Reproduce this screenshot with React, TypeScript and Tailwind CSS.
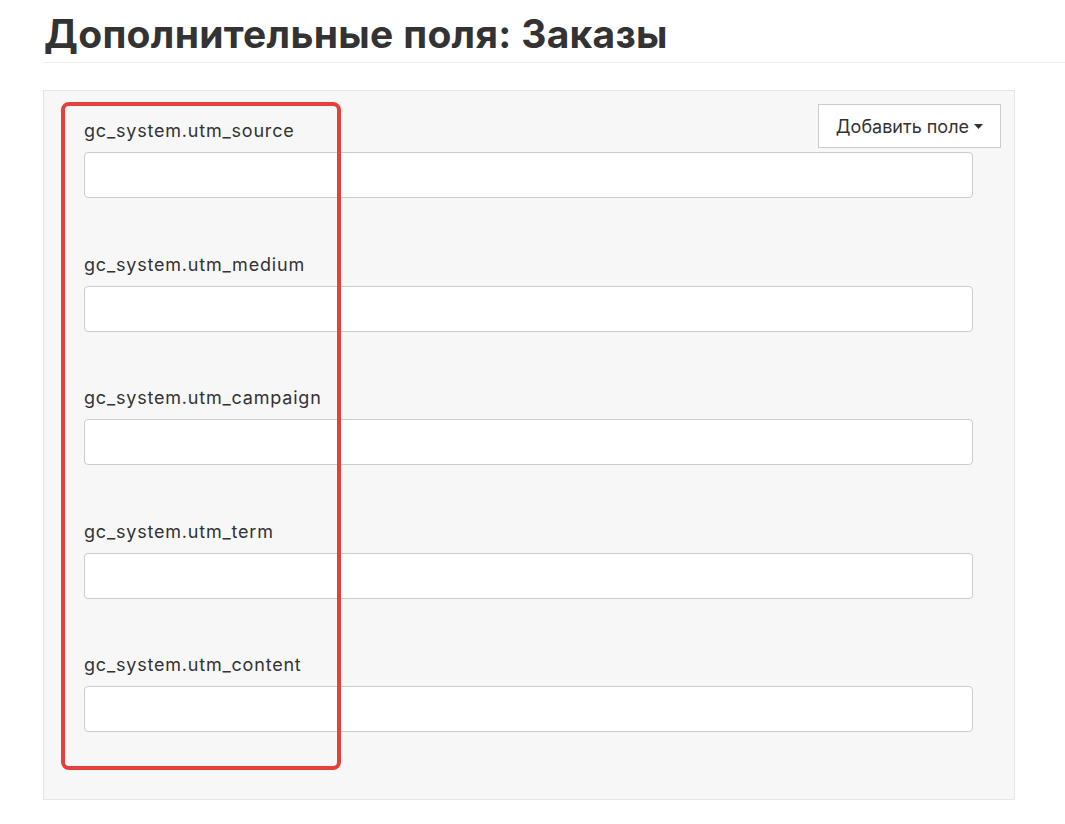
import React from "react";

const fields = [
  "gc_system.utm_source",
  "gc_system.utm_medium",
  "gc_system.utm_campaign",
  "gc_system.utm_term",
  "gc_system.utm_content",
];

export default function App() {
  return (
    <div
      className="relative min-h-[824px] w-[1065px] bg-white text-[#333]"
      style={{ fontFamily: "Inter, 'Noto Sans', sans-serif" }}
    >
      <div className="pl-[43px]">
        <h1 className="pl-[1px] pt-[12px] pb-[6px] text-[39px] font-bold leading-[44px] tracking-[0.3px] text-[#333]">
          Дополнительные поля: Заказы
        </h1>
        <div className="h-px bg-[#eeeeee]" />
        <div className="mt-[27px] w-[972px] border border-[#e6e6e6] bg-[#f7f7f7] pt-[13px] pl-[40px] pr-[13px] pb-[67px]">
          <button className="float-right flex h-[44px] items-center gap-[5px] border border-[#cccccc] bg-white pl-[17px] pr-[17px] text-[18px] text-[#333]">
            Добавить поле
            <svg width="9" height="5" viewBox="0 0 9 5">
              <path d="M0 0h9L4.5 5z" fill="#333" />
            </svg>
          </button>
          <div className="flex flex-col gap-[54.5px] pr-[28px] pt-[15px]">
            {fields.map((f) => (
              <div key={f} className="flex flex-col">
                <label className="mb-[9px] text-[18px] leading-[24px] tracking-[0.8px] text-[#333]">{f}</label>
                <div className="h-[46px] w-[889px] rounded-[4px] border border-[#cccccc] bg-white" />
              </div>
            ))}
          </div>
        </div>
      </div>
      <div className="pointer-events-none absolute left-[61px] top-[102px] h-[668px] w-[280px] rounded-[8px] border-[4px] border-[#e5403a]" />
    </div>
  );
}
